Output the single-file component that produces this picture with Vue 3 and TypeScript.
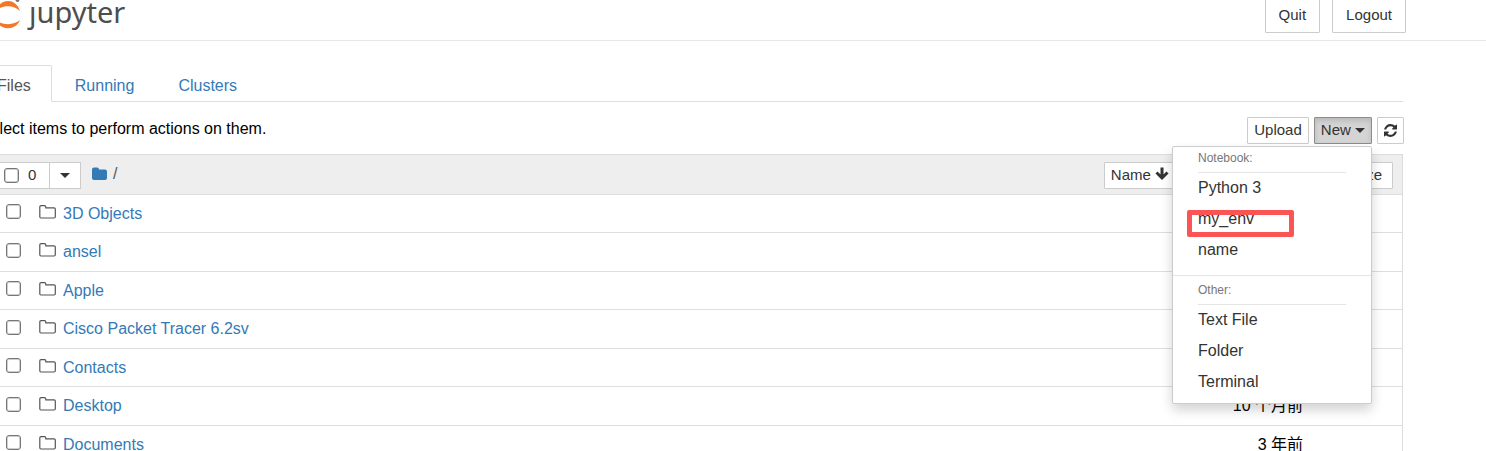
<script setup lang="ts">
import { ref } from 'vue'

interface Entry {
  name: string
  modified: string
}

const entries: Entry[] = [
  { name: '3D Objects', modified: '' },
  { name: 'ansel', modified: '' },
  { name: 'Apple', modified: '' },
  { name: 'Cisco Packet Tracer 6.2sv', modified: '' },
  { name: 'Contacts', modified: '' },
  { name: 'Desktop', modified: '10 个月前' },
  { name: 'Documents', modified: '3 年前' },
]

const tabs: string[] = ['Files', 'Running', 'Clusters']
const activeTab = ref('Files')
const menuOpen = ref(true)
const kernels: string[] = ['Python 3', 'my_env', 'name']
const others: string[] = ['Text File', 'Folder', 'Terminal']
</script>

<template>
  <div class="page">
    <header class="topbar">
      <a class="logo" href="#" aria-label="jupyter">
        <svg class="mark" width="34" height="38" viewBox="-7 -5 34 38" aria-hidden="true">
          <path d="M-4 11C0 -2.300 16 -2.300 20 11C14 4.500 2 4.500 -4 11Z" fill="#f37726" />
          <path d="M-4 20C0 31 16 31 20 20C14 25.500 2 25.500 -4 20Z" fill="#f37726" />
          <circle cx="17.500" cy="0" r="2" fill="#767677" />
        </svg>
        <span class="wordmark"><span class="dotless">j</span>upyter</span>
      </a>
      <div class="session">
        <button type="button" class="btn large">Quit</button>
        <button type="button" class="btn large">Logout</button>
      </div>
    </header>

    <main class="content">
      <nav class="tabs">
        <a
          v-for="tab in tabs"
          :key="tab"
          href="#"
          class="tab"
          :class="{ active: tab === activeTab }"
          @click.prevent="activeTab = tab"
        >{{ tab }}</a>
      </nav>

      <div class="toolbar">
        <p class="hint">Select items to perform actions on them.</p>
        <div class="actions">
          <button type="button" class="btn">Upload</button>
          <div class="dropdown">
            <button type="button" class="btn pressed" :aria-expanded="menuOpen" @click="menuOpen = !menuOpen">
              New <span class="caret"></span>
            </button>
            <div v-if="menuOpen" class="menu">
              <div class="group">
                <div class="heading">Notebook:</div>
                <a v-for="kernel in kernels" :key="kernel" href="#" class="item" :class="{ marked: kernel === 'my_env' }">{{ kernel }}</a>
              </div>
              <div class="group other">
                <div class="heading">Other:</div>
                <a v-for="other in others" :key="other" href="#" class="item">{{ other }}</a>
              </div>
            </div>
          </div>
          <button type="button" class="btn refresh" aria-label="Refresh">
            <svg width="13" height="13" viewBox="0 0 1536 1536" aria-hidden="true">
              <path fill="#333" d="M1511 928q0 5-1 7-64 268-268 434.500T764 1536q-146 0-282.500-55T238 1324l-129 129q-19 19-45 19t-45-19-19-45V960q0-26 19-45t45-19h448q26 0 45 19t19 45-19 45l-137 137q71 66 161 102t187 36q134 0 250-65t186-179q11-17 53-117 8-23 30-23h192q13 0 22.500 9.500t9.500 22.500zm25-800v448q0 26-19 45t-45 19h-448q-26 0-45-19t-19-45 19-45l138-138Q969 256 768 256q-134 0-250 65T332 500q-11 17-53 117-8 23-30 23H50q-13 0-22.500-9.500T18 608v-7q65-268 270-434.500T768 0q146 0 284 55.500T1297 212l130-129q19-19 45-19t45 19 19 45z" />
            </svg>
          </button>
        </div>
      </div>

      <section class="listing">
        <div class="list-header">
          <div class="selector">
            <label class="select-all"><input type="checkbox" class="check" /> <span>0</span></label>
            <button type="button" class="select-menu" aria-label="Select by type"><span class="caret"></span></button>
          </div>
          <a class="crumb" href="#" aria-label="Home">
            <svg width="16" height="14" viewBox="0 0 16 14" aria-hidden="true">
              <path fill="#337ab7" d="M0 2.500Q0 .5 2 .5H5Q7 .5 7 2.500H13Q15 2.500 15 4.500V11Q15 13 13 13H2Q0 13 0 11Z" />
            </svg>
          </a>
          <span class="slash">/</span>
          <div class="sorters">
            <button type="button" class="btn name-sort">
              Name
              <svg class="arrow" width="14" height="14" viewBox="0 0 14 14" aria-hidden="true">
                <path fill="none" stroke="#333" stroke-width="3" d="M7 .5V10.500M1.500 5.500L7 11L12.500 5.500" />
              </svg>
            </button>
            <button type="button" class="btn modified-sort">Last Modified</button>
            <button type="button" class="btn size-sort">File size</button>
          </div>
        </div>
        <div v-for="entry in entries" :key="entry.name" class="row">
          <input type="checkbox" class="check" :aria-label="entry.name" />
          <svg class="folder" width="18" height="14" viewBox="0 0 18 14" aria-hidden="true">
            <path fill="none" stroke="#555" stroke-width="1.200" d="M.8 2Q.8.700 2 .700H5.500Q6.800.700 6.800 2V2.800H15Q16.300 2.800 16.300 4V11.800Q16.300 13 15 13H2Q.8 13 .8 11.800Z" />
          </svg>
          <a href="#" class="name">{{ entry.name }}</a>
          <span class="modified">{{ entry.modified }}</span>
        </div>
      </section>
    </main>
  </div>
</template>

<style>
body {
  margin: 0;
  overflow: hidden;
}
</style>

<style scoped>
.page {
  font-family: "Liberation Sans", "Noto Sans CJK SC", Arial, sans-serif;
  font-size: 16px;
  line-height: 22px;
  color: #000;
  background: #fff;
  overflow: hidden;
  height: 100vh;
}

.page *,
.page *::after {
  box-sizing: border-box;
}

a {
  color: #337ab7;
  text-decoration: none;
}

.topbar {
  display: flex;
  justify-content: space-between;
  align-items: flex-end;
  height: 41px;
  padding: 0 80px 7px 0;
  border-bottom: 1px solid #e7e7e7;
}

.logo {
  display: flex;
  align-items: flex-end;
  margin-left: -7px;
}

.mark {
  flex: none;
}

.wordmark {
  margin-left: 2px;
  font-family: "Noto Sans", sans-serif;
  font-size: 29px;
  line-height: 42px;
  color: #4e4e4e;
}

.dotless {
  display: inline-block;
  clip-path: inset(14px -6px 0 -6px);
}

.session {
  display: flex;
  gap: 12px;
}

.btn {
  height: 27px;
  padding: 0 6px 2px;
  border: 1px solid #ccc;
  border-radius: 1px;
  background: #fff;
  color: #333;
  font: 15px/22px "Liberation Sans", Arial, sans-serif;
  white-space: nowrap;
}

.btn.large {
  height: 37px;
  padding: 0 13px;
}

.btn.pressed {
  border-color: #8c8c8c;
  background: #d4d4d4;
  box-shadow: inset 0 3px 5px rgba(0, 0, 0, 0.125);
}

.btn.refresh {
  display: flex;
  align-items: center;
  padding: 0 6px;
}

.caret {
  display: inline-block;
  border: 5px solid transparent;
  border-top-color: #333;
  border-bottom: 0;
  vertical-align: middle;
}

.content {
  margin: 24px 83px 0 -20px;
}

.tabs {
  display: flex;
  gap: 2px;
  height: 37px;
  margin-left: -4px;
  border-bottom: 1px solid #ddd;
}

.tab {
  height: 37px;
  padding: 9px 20px;
  border: 1px solid transparent;
}

.tab.active {
  border-color: #ddd;
  border-bottom-color: #fff;
  border-radius: 2px 2px 0 0;
  color: #555;
  background: #fff;
}

.toolbar {
  display: flex;
  justify-content: space-between;
  align-items: flex-end;
  height: 42px;
}

.hint {
  margin: 0 0 4px;
}

.actions {
  display: flex;
  gap: 5px;
  margin-right: -1px;
}

.dropdown {
  position: relative;
}

.menu {
  position: absolute;
  z-index: 2;
  top: 29px;
  right: 0;
  width: 200px;
  padding: 1px 0 2px;
  border: 1px solid #ccc;
  border-radius: 2px;
  background: #fff;
  box-shadow: 0 6px 12px rgba(0, 0, 0, 0.175);
}

.group {
  padding: 0 25px;
}

.group.other {
  margin-top: 6px;
  padding-top: 4px;
  border-top: 1px solid #e5e5e5;
}

.heading {
  height: 25px;
  margin-bottom: 3px;
  border-bottom: 1px solid #e5e5e5;
  color: #777;
  font-size: 12px;
  line-height: 20px;
}

.item {
  position: relative;
  display: block;
  height: 31px;
  line-height: 23px;
  color: #333;
}

.item.marked::after {
  content: "";
  position: absolute;
  top: 3px;
  left: -11px;
  width: 107px;
  height: 27px;
  border: 5px solid #fb5454;
  border-radius: 2px;
}

.listing {
  margin-top: 10px;
  border: 1px solid #ddd;
}

.list-header {
  display: flex;
  align-items: center;
  height: 40px;
  padding: 0 9px 0 15px;
  border-bottom: 1px solid #ddd;
  background: #eee;
}

.selector {
  display: flex;
  height: 27px;
  margin-top: 2px;
  border: 1px solid #ccc;
  background: #fff;
}

.select-all {
  display: flex;
  align-items: center;
  gap: 9px;
  width: 52px;
  padding: 0 0 1px 7px;
  color: #333;
  font-size: 15px;
}

.select-menu {
  width: 31px;
  padding: 0 0 2px;
  border: 0;
  border-left: 1px solid #ccc;
  background: #fff;
}

.check {
  appearance: none;
  flex: none;
  width: 15px;
  height: 15px;
  margin: 0;
  border: 1px solid #767676;
  border-radius: 3px;
  background: #fff;
  box-shadow: inset 0 0 0 1px #d0d0d0;
}

.crumb {
  display: flex;
  margin: 0 0 2px 11px;
}

.slash {
  margin: 0 0 2px 5px;
  color: #555;
}

.sorters {
  display: flex;
  margin: 2px 0 0 auto;
}

.arrow {
  vertical-align: -1px;
}

.modified-sort {
  width: 144px;
}

.btn.size-sort {
  padding-right: 10px;
}

.row {
  display: flex;
  align-items: center;
  height: 38px;
  padding: 0 99px 0 25px;
  border-bottom: 1px solid #ddd;
}

.row:nth-child(odd) {
  height: 39px;
}

.row .check {
  margin-bottom: 4px;
}

.folder {
  flex: none;
  margin: 0 6px 4px 18px;
}

.modified {
  margin-left: auto;
}
</style>
